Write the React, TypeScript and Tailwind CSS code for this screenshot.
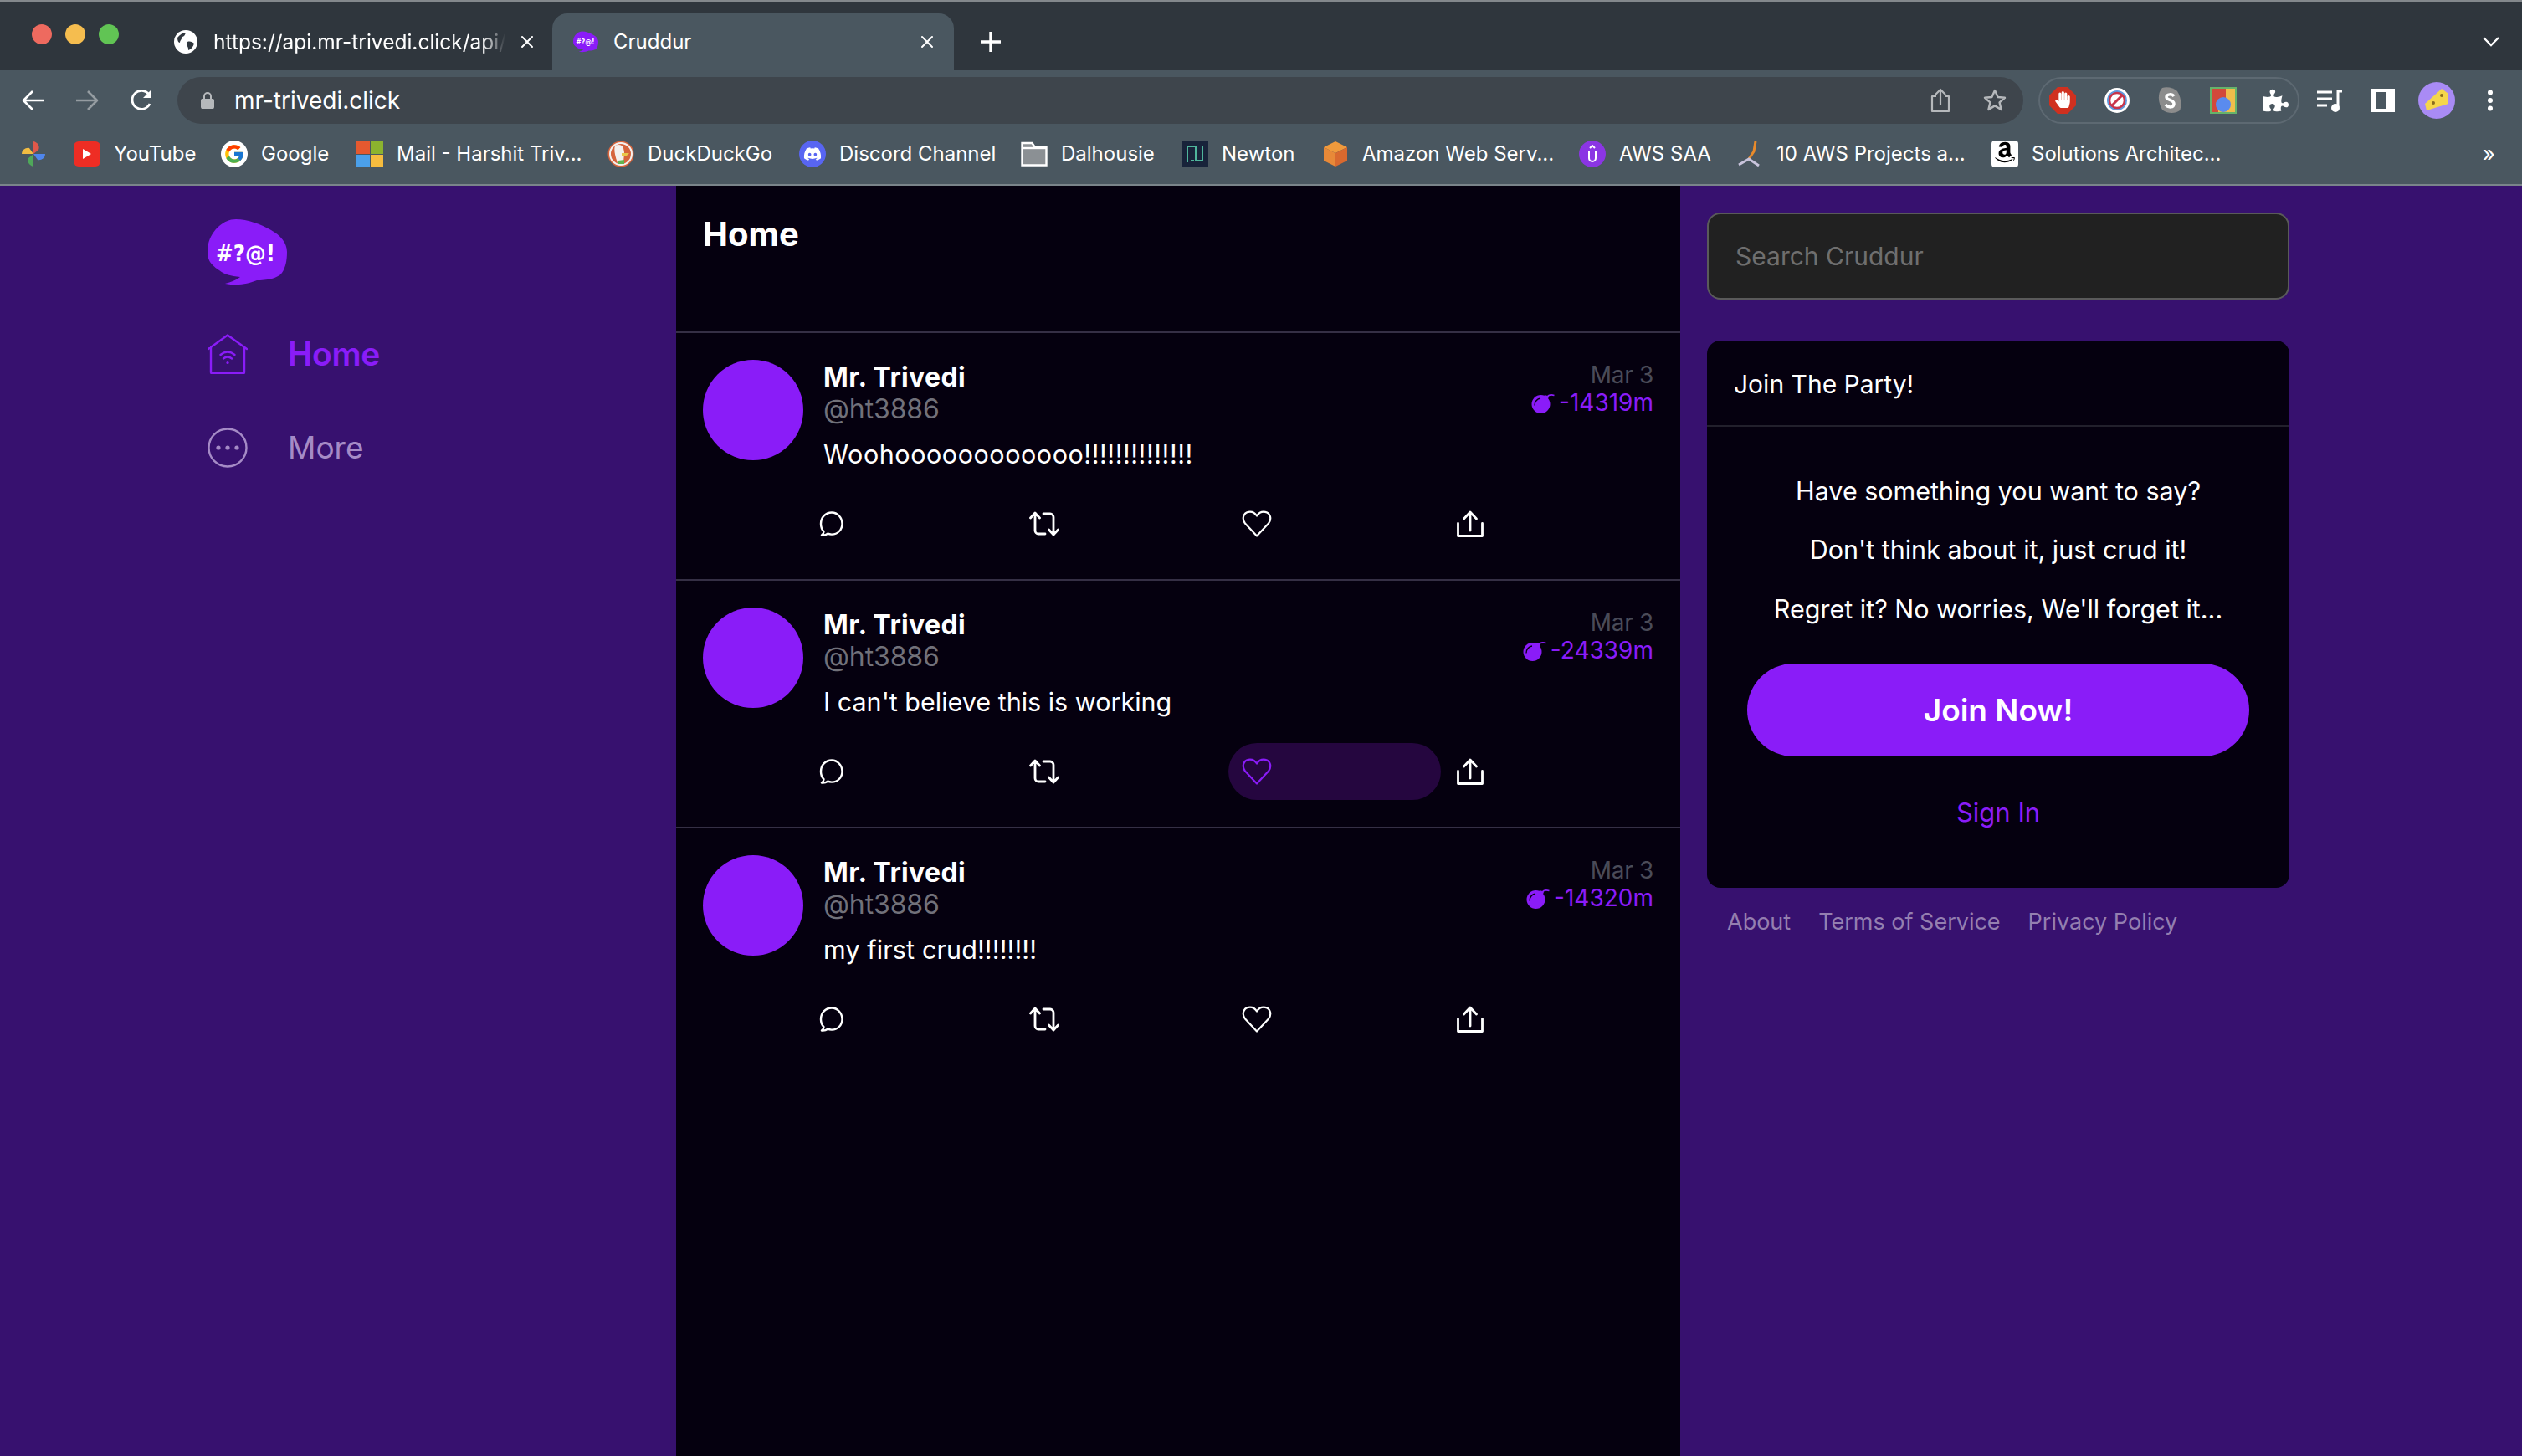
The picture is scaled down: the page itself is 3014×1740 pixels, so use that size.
import React from "react";
import { FaDiscord, FaHandPaper, FaPuzzlePiece, FaAmazon } from "react-icons/fa";
import { FcGoogle } from "react-icons/fc";

const Logo = ({ w, h }: { w: number; h: number }) => (
  <svg width={w} height={h} viewBox="0 0 95 79">
    <path fill="#8a1cf8" d="M34 0C48 0 64 6 76 13C87 19 95 28 95 39C95 50 93 58 89 64C84 71 70 73 59 73C52 76 42 78 35 78C30 78 25 78 21 77C28 75 34 73 39 69C28 68 20 66 14 61C5 55 0 50 0 39C0 28 3 18 14 8C20 3 26 0 34 0Z" />
    <text x="10" y="50" fontSize="27" fontWeight="700" fill="#fff" textLength="71" lengthAdjust="spacingAndGlyphs" fontFamily="'DejaVu Sans', sans-serif">#?@!</text>
  </svg>
);

const Bomb = () => (
  <svg width="28" height="24" viewBox="0 0 28 24" className="shrink-0">
    <circle cx="11.5" cy="13" r="11" fill="#8a1cf8" />
    <path d="M16 2l5 1.5-1.5 5-5-1.5z" fill="#8a1cf8" />
    <path d="M19 4.5C20.5 2 24 1.5 27.5 2.5" fill="none" stroke="#8a1cf8" strokeWidth="1.6" />
    <path d="M4 14.5C4 10 7 6.5 11 6" fill="none" stroke="#05000f" strokeWidth="1.4" />
  </svg>
);

const Reply = () => (
  <svg width="30" height="30" viewBox="0 0 30 30" fill="none" stroke="#fff" strokeWidth="2.4" strokeLinejoin="round">
    <path d="M16 1.5C8.5 1.5 3 7.5 3 15c0 4 1.5 7.2 3.5 9.2 0 1.6-.7 3-2.5 4.3 2.8.3 5.4-.4 7.2-1.8 1.3.6 3 .9 4.8.9 7 0 12.5-5.4 12.5-12.6S23 1.5 16 1.5z" />
  </svg>
);
const Retweet = () => (
  <svg width="36" height="30" viewBox="0 0 36 30" fill="none" stroke="#fff" strokeWidth="2.8" strokeLinecap="round" strokeLinejoin="round">
    <path d="M1.5 8L7 2l5.5 6M7 3v20a4 4 0 0 0 4 4h8M34.5 22L29 28l-5.5-6M29 27V7a4 4 0 0 0-4-4h-8" />
  </svg>
);
const Heart = ({ color }: { color: string }) => (
  <svg width="36" height="32" viewBox="0 0 36 32" fill="none" stroke={color} strokeWidth="2.2" strokeLinejoin="round">
    <path d="M18 30.5L4 15.5C0 10.5 1.5 3 8 1.8C12.5 1 16 3.5 18 6.5C20 3.5 23.5 1 28 1.8C34.5 3 36 10.5 32 15.5Z" />
  </svg>
);
const Share = () => (
  <svg width="32" height="32" viewBox="0 0 32 32" fill="none" stroke="#fff" strokeWidth="2.8" strokeLinecap="round" strokeLinejoin="round">
    <path d="M1.5 15.5V30.5H30.5V15.5M16 2.5V24M8.5 10L16 2l7.5 8" />
  </svg>
);

const posts = [
  { text: "Woohoooooooooooo!!!!!!!!!!!!!!", ttl: "-14319m", liked: false, track: "tracking-[0.55px]", ttlW: "" },
  { text: "I can't believe this is working", ttl: "-24339m", liked: true, track: "tracking-[0px]", ttlW: "" },
  { text: "my first crud!!!!!!!!", ttl: "-14320m", liked: false, track: "tracking-[0.12px]", ttlW: "" },
];

const Post = ({ text, ttl, liked, track, last }: { text: string; ttl: string; liked: boolean; track: string; last: boolean }) => (
  <article className={`flex h-[296px] pl-[32px] pr-[32px] pt-[32px] ${last ? "" : "border-b-2 border-[#352f45]"}`}>
    <div className="h-[120px] w-[120px] shrink-0 rounded-full bg-[#8a1cf8]" />
    <div className="ml-[24px] min-w-0 flex-1 pt-[2px]">
      <div className="flex justify-between">
        <div>
          <div className="h-[38px] text-[32px] font-bold leading-[38px] tracking-[0.35px] text-white">Mr. Trivedi</div>
          <div className="h-[38px] text-[32px] leading-[38px] tracking-[-0.1px] text-[#71717a]">@ht3886</div>
        </div>
        <div className="flex flex-col items-end text-[28px] leading-[33px]">
          <div className="tracking-[-0.3px] text-[#4a4b58]">Mar 3</div>
          <div className="flex items-center gap-[5px] text-[#8a1cf8]">
            <Bomb />
            <span>{ttl}</span>
          </div>
        </div>
      </div>
      <div className={`mt-[16px] h-[38px] text-[30.5px] leading-[38px] text-white ${track}`}>{text}</div>
      <div className="ml-[-24px] mt-[30px] flex">
        <div className="flex h-[68px] w-[254px] items-center pl-[18px]"><Reply /></div>
        <div className="flex h-[68px] w-[254px] items-center pl-[16px]"><Retweet /></div>
        <div className={`flex h-[68px] w-[254px] items-center rounded-full pl-[16px] ${liked ? "bg-[#25063f]" : ""}`}>
          <Heart color={liked ? "#8a1cf8" : "#ffffff"} />
        </div>
        <div className="flex h-[68px] w-[254px] items-center pl-[19px]"><Share /></div>
      </div>
    </div>
  </article>
);

const Dot = ({ c }: { c: string }) => <span className={`h-[24px] w-[24px] rounded-full ${c}`} />;

const X = () => (
  <svg width="16" height="16" viewBox="0 0 16 16" stroke="#fff" strokeWidth="2" strokeLinecap="round"><path d="M2 2l12 12M14 2L2 14" /></svg>
);

const Pinwheel = () => (
  <svg width="30" height="32" viewBox="0 0 30 32">
    <path fill="#e0584a" d="M15 1c5 1 8 6 6 10l-6 5z" />
    <path fill="#4f86ec" d="M15 16h14c0 5-5 8-9 7z" />
    <path fill="#4fa85a" d="M15 16v15c-5-1-8-6-6-10z" />
    <path fill="#f2bc42" d="M15 16H1c0-5 5-8 9-7z" />
  </svg>
);
const YT = () => (
  <div className="flex h-[30px] w-[32px] items-center justify-center rounded-[6px] bg-[#ee2d24]">
    <svg width="12" height="14" viewBox="0 0 12 14"><path fill="#fff" d="M1 1l10 6-10 6z" /></svg>
  </div>
);
const G = () => (
  <div className="flex h-[32px] w-[32px] items-center justify-center rounded-full bg-white"><FcGoogle size={26} /></div>
);
const MS = () => (
  <div className="grid h-[32px] w-[32px] grid-cols-2 gap-[1px]">
    <span className="bg-[#e5592f]" /><span className="bg-[#8cb32e]" /><span className="bg-[#4ba0ea]" /><span className="bg-[#f6bc3e]" />
  </div>
);
const DDG = () => (
  <svg width="32" height="32" viewBox="0 0 32 32">
    <circle cx="16" cy="16" r="15.5" fill="#d6643c" /><circle cx="16" cy="16" r="13" fill="#d6643c" stroke="#f3f0ee" strokeWidth="2" />
    <path fill="#f3f0ee" d="M9 6c4-2 9-1 10 3l1 5-1 13h-7c-2-6-5-15-3-21z" />
    <path fill="#e8c64a" d="M17 15h9l-3 3h-6z" /><path fill="#62b34f" d="M13 24l7-1v5l-7 0z" />
  </svg>
);
const Discord = () => (
  <div className="flex h-[32px] w-[32px] items-center justify-center rounded-full bg-[#5865f2] text-white"><FaDiscord size={22} /></div>
);
const Folder = () => (
  <svg width="32" height="30" viewBox="0 0 32 30" fill="#8b9094" stroke="#fff" strokeWidth="2.4"><path d="M1.5 28.5V2h12l3 4.5h14v22z" /><path d="M1.5 8h29" fill="none" /></svg>
);
const Newton = () => (
  <svg width="32" height="32" viewBox="0 0 32 32" fill="none">
    <rect width="32" height="32" fill="#18233a" />
    <path stroke="#4fb59c" strokeWidth="2" d="M7 26V7h10v17h8V7" /><path stroke="#4fb59c" strokeWidth="2" d="M11 24h4" />
  </svg>
);
const Cube = () => (
  <svg width="32" height="32" viewBox="0 0 32 32"><path fill="#f09a3c" d="M16 1l14 7-14 7-14-7z" /><path fill="#e88938" d="M2 8l14 7v16L2 24z" /><path fill="#d9692f" d="M30 8l-14 7v16l14-7z" /></svg>
);
const SAA = () => (
  <div className="flex h-[32px] w-[32px] items-center justify-center rounded-full bg-[#8b35e4]">
    <svg width="14" height="22" viewBox="0 0 14 22" fill="none" stroke="#fff" strokeWidth="2"><path d="M3 8v8a4 4 0 0 0 8 0V8M4 4l3-3 3 3" /></svg>
  </div>
);
const Figure = () => (
  <svg width="30" height="32" viewBox="0 0 30 32" fill="none"><path stroke="#e88a2b" strokeWidth="3" d="M22 1l-2 12-6 9" /><path stroke="#c9c4dc" strokeWidth="3" d="M2 29l12-7 12 8" /></svg>
);
const A = () => (
  <div className="relative flex h-[32px] w-[32px] items-start justify-center rounded-[4px] bg-white">
    <FaAmazon size={28} color="#000" />
  </div>
);

type BM = { icon: React.ReactNode; label: string; w: string };
const bookmarks: BM[] = [
  { icon: <YT />, label: "YouTube", w: "w-[176px]" },
  { icon: <G />, label: "Google", w: "w-[162px]" },
  { icon: <MS />, label: "Mail - Harshit Triv...", w: "w-[300px]" },
  { icon: <DDG />, label: "DuckDuckGo", w: "w-[229px]" },
  { icon: <Discord />, label: "Discord Channel", w: "w-[265px]" },
  { icon: <Folder />, label: "Dalhousie", w: "w-[192px]" },
  { icon: <Newton />, label: "Newton", w: "w-[168px]" },
  { icon: <Cube />, label: "Amazon Web Serv...", w: "w-[307px]" },
  { icon: <SAA />, label: "AWS SAA", w: "w-[188px]" },
  { icon: <Figure />, label: "10 AWS Projects a...", w: "w-[305px]" },
  { icon: <A />, label: "Solutions Architec...", w: "w-[300px]" },
];

const Extensions = () => (
  <div className="ml-[18px] flex h-[56px] w-[312px] items-center justify-between rounded-full border-2 border-[#5d6972] px-[11px]">
    <svg width="32" height="32" viewBox="0 0 32 32"><path fill="#d0301f" d="M10 0h12l10 10v12L22 32H10L0 22V10z" /><foreignObject x="6" y="5" width="20" height="22"><FaHandPaper size={20} color="#fff" /></foreignObject></svg>
    <svg width="32" height="32" viewBox="0 0 32 32" fill="none"><circle cx="16" cy="16" r="15" fill="#fff" /><circle cx="16" cy="16" r="12" fill="#5f9ade" /><circle cx="16" cy="16" r="9" fill="#fff" stroke="#c8354a" strokeWidth="2.5" /><path d="M10 22L22 10" stroke="#c8354a" strokeWidth="3" /></svg>
    <svg width="30" height="32" viewBox="0 0 30 32"><path fill="#8c8c8c" d="M6 1c6-2 14 0 18 4 4 6 6 16 3 23-5 4-14 4-20 0C2 22-1 8 6 1z" /><path fill="none" stroke="#fff" strokeWidth="3.5" d="M20 11c-2-3-9-3-9 1s9 3 9 8-7 5-10 1" /></svg>
    <svg width="32" height="32" viewBox="0 0 32 32"><rect width="32" height="32" fill="#66b36a" /><rect x="2" y="2" width="28" height="28" fill="#f0bd4b" /><path fill="#d2493a" d="M2 2h17v13H2zM2 15h8v15H2z" /><ellipse cx="16" cy="21" rx="9" ry="9" fill="#5a8bee" /></svg>
    <FaPuzzlePiece size={30} color="#fff" />
  </div>
);

export default function App() {
  return (
    <div className="flex h-[1740px] w-[3014px] flex-col overflow-hidden bg-[#37116f] text-white" style={{ fontFamily: "Inter, 'Liberation Sans', sans-serif" }}>
      <header className="h-[222px] shrink-0 border-b-2 border-[#7a848a] bg-[#4a5760]">
        <div className="flex h-[84px] items-end border-t-2 border-[#83888c] bg-[#2f363d]">
          <div className="flex h-[82px] w-[196px] items-center gap-[16px] pb-[4px] pl-[38px]">
            <Dot c="bg-[#ee6a5f]" /><Dot c="bg-[#f5bd4f]" /><Dot c="bg-[#61c454]" />
          </div>
          <div className="flex h-[68px] w-[464px] items-center pl-[12px] pr-[22px]">
            <svg width="28" height="28" viewBox="0 0 28 28" className="shrink-0"><circle cx="14" cy="14" r="14" fill="#fff" /><path fill="#2f363d" d="M4 9c3-4 7-6 10-6-1 3-2 5-5 5 1 3-2 4-2 7-2 0-3-3-3-6zM16 14c3-1 6 0 8 2-1 4-4 7-7 8 1-3-3-6-1-10z" /></svg>
            <span className="ml-[19px] w-[349px] shrink-0 overflow-hidden whitespace-nowrap text-[24.5px] leading-[32px] [mask-image:linear-gradient(to_right,black_92%,transparent)]">https://api.mr-trivedi.click/api/h</span>
            <span className="ml-auto"><X /></span>
          </div>
          <div className="flex h-[68px] w-[480px] items-center rounded-t-[18px] bg-[#4a5760] pl-[25px] pr-[24px]">
            <Logo w={30} h={26} />
            <span className="ml-[18px] text-[24px] leading-[32px]">Cruddur</span>
            <span className="ml-auto"><X /></span>
          </div>
          <div className="flex h-[68px] items-center pl-[31px]">
            <svg width="26" height="26" viewBox="0 0 26 26" stroke="#fff" strokeWidth="3.4"><path d="M13 1v24M1 13h24" /></svg>
          </div>
          <div className="ml-auto flex h-[68px] items-center pr-[26px]">
            <svg width="22" height="14" viewBox="0 0 22 14" fill="none" stroke="#fff" strokeWidth="2.4"><path d="M2 2l9 9 9-9" /></svg>
          </div>
        </div>

        <div className="flex h-[64px] items-center pt-[8px]">
          <div className="flex w-[212px] items-center pl-[26px]">
            <svg width="28" height="26" viewBox="0 0 28 26" fill="none" stroke="#fff" strokeWidth="2.6" strokeLinejoin="round"><path d="M27 13H2M13 2L2 13l11 11" /></svg>
            <svg className="ml-[36px]" width="28" height="26" viewBox="0 0 28 26" fill="none" stroke="#959ca1" strokeWidth="2.6" strokeLinejoin="round"><path d="M1 13h25M15 2l11 11-11 11" /></svg>
            <svg className="ml-[37px]" width="28" height="28" viewBox="0 0 28 28" fill="none" stroke="#fff" strokeWidth="2.8"><path d="M24 18a11 11 0 1 1-1-11" /><path fill="#fff" stroke="none" d="M26 1v10H16z" /></svg>
          </div>
          <div className="flex h-[56px] w-[2206px] items-center rounded-full bg-[#3e454c] pl-[28px]">
            <svg width="16" height="20" viewBox="0 0 16 20"><rect y="8" width="16" height="12" rx="2" fill="#b5b8bb" /><path d="M4 9V5a4 4 0 0 1 8 0v4" fill="none" stroke="#b5b8bb" strokeWidth="2" /></svg>
            <span className="ml-[24px] text-[28px] leading-[34px]">mr-trivedi.click</span>
            <svg className="ml-auto" width="24" height="30" viewBox="0 0 24 30" fill="none" stroke="#b5b8bb" strokeWidth="2.2" strokeLinejoin="round"><path d="M7 10H2v18h20V10h-5M12 20V2M6 8l6-6 6 6" /></svg>
            <svg className="ml-[38px] mr-[19px]" width="30" height="30" viewBox="0 0 30 30" fill="none" stroke="#b5b8bb" strokeWidth="2.4" strokeLinejoin="round"><path d="M15 3l3.6 8 8.4.8-6.4 5.6 2 8.6-7.6-4.6L7.4 26l2-8.6L3 11.8l8.4-.8z" /></svg>
          </div>
          <Extensions />
          <div className="flex items-center">
            <svg className="ml-[20px]" width="32" height="28" viewBox="0 0 32 28" fill="none" stroke="#fff" strokeWidth="3"><path d="M1 4h18M1 12h18M1 20h12" /><path d="M26 22V3h5" /><circle cx="23" cy="23" r="3.5" fill="#fff" /></svg>
            <svg className="ml-[34px]" width="28" height="28" viewBox="0 0 28 28"><path fill="#fff" fillRule="evenodd" d="M0 0h28v28H0zM6 4v20h12V4z" /></svg>
            <svg className="ml-[28px]" width="44" height="44" viewBox="0 0 44 44"><circle cx="22" cy="22" r="22" fill="#a98bf5" /><path fill="#f5d64c" d="M8 26L28 8l8 6v12l-26 8z" /><circle cx="28" cy="16" r="2" fill="#8a6d1d" /><circle cx="18" cy="25" r="2" fill="#8a6d1d" /></svg>
            <svg className="ml-[38px]" width="8" height="26" viewBox="0 0 8 26" fill="#fff"><circle cx="4" cy="3.5" r="3" /><circle cx="4" cy="13" r="3" /><circle cx="4" cy="22.5" r="3" /></svg>
          </div>
        </div>

        <div className="flex h-[72px] items-center pl-[25px]">
          <div className="w-[63px]"><Pinwheel /></div>
          {bookmarks.map((b) => (
            <div key={b.label} className={`flex items-center ${b.w}`}>
              <span className="flex w-[32px] shrink-0 items-center justify-center">{b.icon}</span>
              <span className="ml-[16px] whitespace-nowrap text-[24px] leading-[32px]">{b.label}</span>
            </div>
          ))}
          <span className="ml-auto pr-[32px] text-[26px] leading-[32px]">»</span>
        </div>
      </header>

      <main className="flex min-h-0 flex-1">
        <aside className="w-[808px] shrink-0 pl-[248px] pt-[40px]">
          <Logo w={95} h={79} />
          <nav className="mt-[58px] flex flex-col gap-[64px]">
            <div className="flex h-[48px] items-center gap-[48px]">
              <svg width="48" height="48" viewBox="0 0 48 48" fill="none" stroke="#8a1cf8" strokeWidth="2.4" strokeLinejoin="round" strokeLinecap="round">
                <path d="M1 18L24 1.5 47 18M4 16v30a1 1 0 0 0 1 1h38a1 1 0 0 0 1-1V16" />
                <path d="M19 29.5q5-4 10 0M15.5 25q8.5-7 17 0" />
                <circle cx="24" cy="34.5" r="1.6" fill="#8a1cf8" stroke="none" />
              </svg>
              <span className="text-[39px] font-semibold leading-[48px] tracking-[-0.2px] text-[#8a1cf8]">Home</span>
            </div>
            <div className="flex h-[48px] items-center gap-[48px]">
              <svg width="48" height="48" viewBox="0 0 48 48" fill="none" stroke="#a58bc6" strokeWidth="2.4">
                <circle cx="24" cy="24" r="22.5" />
                <circle cx="13" cy="24" r="2.6" fill="#a58bc6" stroke="none" />
                <circle cx="24" cy="24" r="2.6" fill="#a58bc6" stroke="none" />
                <circle cx="35" cy="24" r="2.6" fill="#a58bc6" stroke="none" />
              </svg>
              <span className="text-[37px] leading-[48px] text-[#a58bc6]">More</span>
            </div>
          </nav>
        </aside>

        <section className="w-[1200px] shrink-0 bg-[#05000f]">
          <div className="h-[176px] border-b-2 border-[#352f45] pl-[32px] pt-[34px]">
            <h1 className="text-[40px] font-bold leading-[48px] text-white">Home</h1>
          </div>
          {posts.map((p, i) => (
            <Post key={p.ttl} text={p.text} ttl={p.ttl} liked={p.liked} track={p.track} last={i === posts.length - 1} />
          ))}
        </section>

        <aside className="flex-1 pl-[32px] pt-[32px]">
          <input
            placeholder="Search Cruddur"
            className="block h-[104px] w-[696px] rounded-[16px] border-2 border-[#5a5a5a] bg-[#212121] px-[32px] text-[30px] outline-none placeholder:text-[#6f6f6f]"
          />
          <div className="mt-[49px] h-[654px] w-[696px] rounded-[16px] bg-[#05000f]">
            <div className="flex h-[103px] items-center border-b-2 border-[#22202c] pl-[32px] pt-[2px] text-[30px] leading-[38px]">Join The Party!</div>
            <div className="flex flex-col items-center px-[48px] pt-[58px] text-[30.5px] leading-[38px]">
              <p>Have something you want to say?</p>
              <p className="mt-[32px]">Don't think about it, just crud it!</p>
              <p className="mt-[33px]">Regret it? No worries, We'll forget it...</p>
              <button className="mt-[46px] h-[111px] w-[600px] rounded-full bg-[#8a1cf8] text-[37px] font-semibold text-white">Join Now!</button>
              <a className="mt-[48px] text-[31px] text-[#8a1cf8]">Sign In</a>
            </div>
          </div>
          <div className="mt-[24px] flex gap-[33px] pl-[24px] text-[27px] leading-[34px] text-[#947fb0]">
            <span>About</span>
            <span>Terms of Service</span>
            <span>Privacy Policy</span>
          </div>
        </aside>
      </main>
    </div>
  );
}
